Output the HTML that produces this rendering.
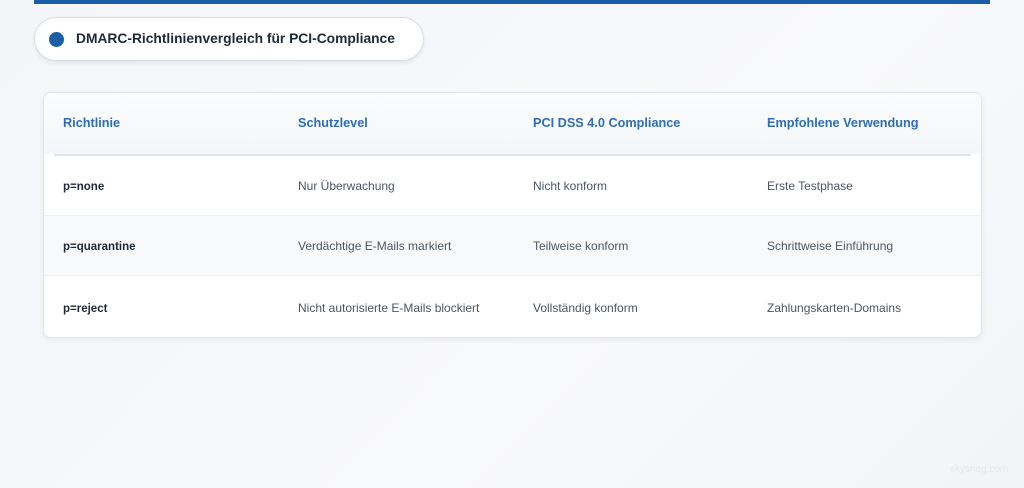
<!DOCTYPE html>
<html><head><meta charset="utf-8"><style>
*{margin:0;padding:0;box-sizing:border-box}
body{width:1024px;height:488px;overflow:hidden;background:linear-gradient(135deg,#f3f5f8,#f8f9fb 60%,#f2f4f7);font-family:"Liberation Sans",sans-serif;position:relative}
.bar{position:absolute;left:34px;top:0;width:956px;height:4px;background:#1a5ea6}
.pill{position:absolute;left:34px;top:17px;width:390px;height:44px;background:#fff;border:1px solid #d6dde6;border-radius:22px;box-shadow:0 2px 5px rgba(0,0,0,.08)}
.dot{position:absolute;left:14px;top:14px;width:15px;height:15px;border-radius:50%;background:#1a5ea6}
.pill span{position:absolute;left:41px;top:13px;font-size:13.8px;font-weight:bold;color:#1f2937}
.card{position:absolute;left:43px;top:92px;width:939px;height:246px;background:#fff;border:1px solid #e1e6ed;border-radius:8px;box-shadow:0 2px 6px rgba(0,0,0,.06);overflow:hidden}
.hd{position:absolute;left:0;top:0;width:100%;height:61px;background:linear-gradient(#fbfcfd,#f4f6f9)}
.line{position:absolute;left:10px;right:10px;top:61px;height:2px;background:#dfe4ec}
.row{position:absolute;left:0;width:100%;height:61px}
.c{position:absolute;font-size:12px;color:#4b5563;line-height:14px}
.h{position:absolute;font-size:12.7px;font-weight:bold;color:#2f6db5;top:23px}
.b{font-weight:bold;color:#1f2937;font-size:11.5px;margin-top:1px}
.wm{position:absolute;left:950px;top:464px;font-size:10px;color:#e4e7eb}
</style></head><body>
<div class="bar"></div>
<div class="pill"><div class="dot"></div><span>DMARC-Richtlinienvergleich für PCI-Compliance</span></div>
<div class="card">
<div class="hd"><div class="h" style="left:19px">Richtlinie</div><div class="h" style="left:254px">Schutzlevel</div><div class="h" style="left:489px">PCI DSS 4.0 Compliance</div><div class="h" style="left:723px">Empfohlene Verwendung</div></div>
<div class="line"></div>
<div class="row" style="top:63px"><div class="c b" style="left:19px;top:23px">p=none</div><div class="c" style="left:254px;top:23px">Nur Überwachung</div><div class="c" style="left:489px;top:23px">Nicht konform</div><div class="c" style="left:723px;top:23px">Erste Testphase</div></div>
<div class="row" style="top:122px;background:#f7f9fb;border-top:1px solid #eef1f5;border-bottom:1px solid #eef1f5"><div class="c b" style="left:19px;top:23px">p=quarantine</div><div class="c" style="left:254px;top:23px">Verdächtige E-Mails markiert</div><div class="c" style="left:489px;top:23px">Teilweise konform</div><div class="c" style="left:723px;top:23px">Schrittweise Einführung</div></div>
<div class="row" style="top:184px"><div class="c b" style="left:19px;top:24px">p=reject</div><div class="c" style="left:254px;top:24px">Nicht autorisierte E-Mails blockiert</div><div class="c" style="left:489px;top:24px">Vollständig konform</div><div class="c" style="left:723px;top:24px">Zahlungskarten-Domains</div></div>
</div>
<div class="wm">skysnag.com</div>
</body></html>
